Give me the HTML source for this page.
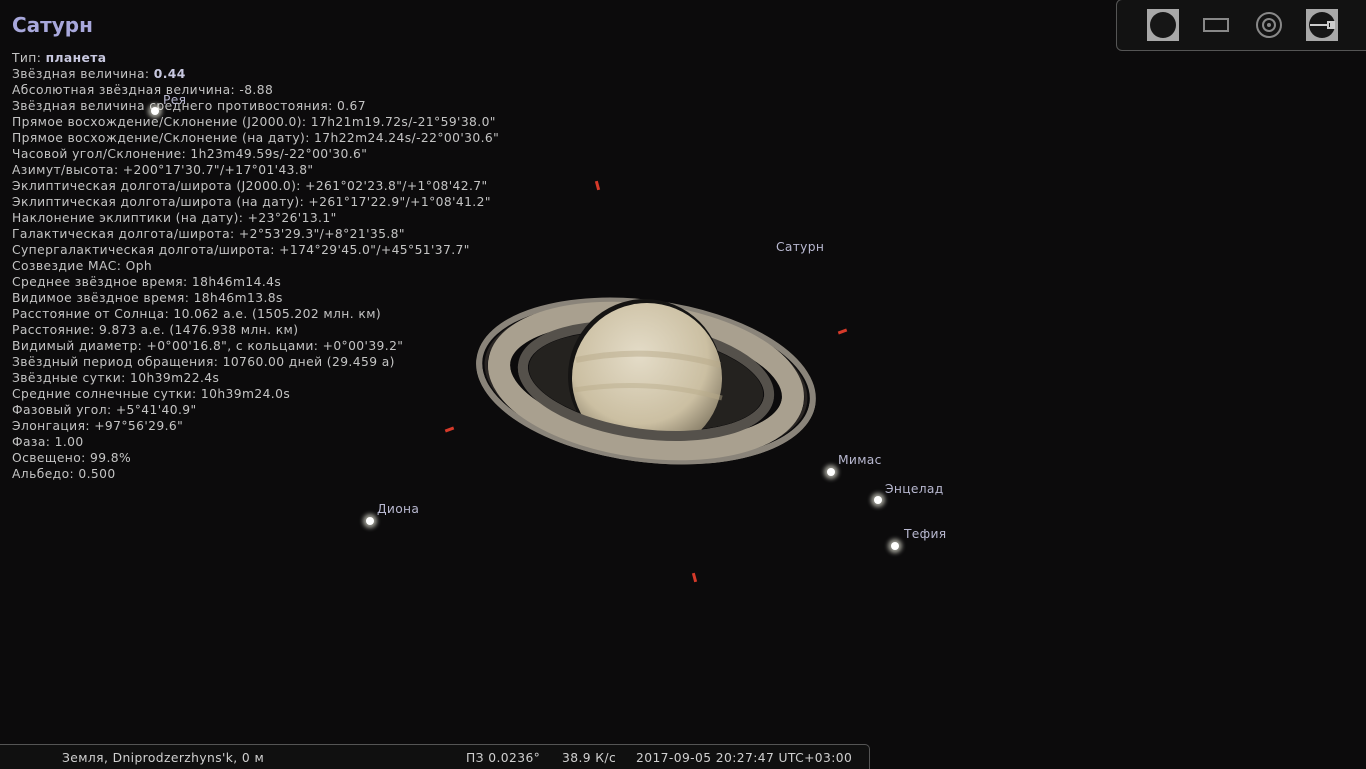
<!DOCTYPE html>
<html><head><meta charset="utf-8"><style>
html,body{margin:0;padding:0;width:1366px;height:768px;overflow:hidden;background:#0c0b0c;font-family:"DejaVu Sans","Liberation Sans",sans-serif;}
#info{position:absolute;left:12px;top:50px;font-size:12.3px;line-height:16px;color:#c4c4c4;white-space:pre;letter-spacing:0.4px;}
#info b{color:#c8c8e0;}
h1{position:absolute;left:12px;top:13px;margin:0;font-size:20px;color:#a8a8dc;font-weight:bold;}
.lbl{position:absolute;font-size:12.3px;color:#b8b8d0;white-space:pre;letter-spacing:0.3px;}
.star{position:absolute;width:8px;height:8px;border-radius:50%;background:#fff;box-shadow:0 0 4px 3px rgba(255,255,240,.6);}
.red{position:absolute;width:3px;height:9px;background:#d63a2a;}
#bar{position:absolute;left:0;top:744px;width:869px;height:24px;border:1px solid #555;border-left:none;border-bottom:none;border-top-right-radius:5px;background:#101010;color:#d0d0d0;font-size:12.3px;letter-spacing:0.4px;}
#tb{position:absolute;left:1116px;top:-1px;width:260px;height:50px;border:1px solid #555;border-radius:6px;background:#121212;}
</style></head><body>
<svg width="1366" height="768" style="position:absolute;left:0;top:0">
<defs>
<radialGradient id="pl" cx="45%" cy="35%" r="65%"><stop offset="0" stop-color="#e4dcc8"/><stop offset=".7" stop-color="#cbbfa2"/><stop offset="1" stop-color="#8a806a"/></radialGradient>
<clipPath id="front"><rect x="400" y="381" width="500" height="200" transform="rotate(7.6 646 381)"/></clipPath>
<g id="rings">
<ellipse cx="646" cy="381" rx="168" ry="78" fill="none" stroke="#8a847a" stroke-width="6"/>
<ellipse cx="646" cy="381" rx="161" ry="73" fill="none" stroke="#2a2624" stroke-width="3"/>
<ellipse cx="646" cy="381" rx="148" ry="66" fill="none" stroke="#a9a08f" stroke-width="22"/>
<ellipse cx="646" cy="381" rx="124" ry="53" fill="none" stroke="#55514b" stroke-width="10"/>
</g>
</defs>
<g transform="rotate(7.6 646 381)">
<use href="#rings"/>
<ellipse cx="646" cy="381" rx="118" ry="47" fill="#24221f"/>
</g>
<circle cx="645" cy="376" r="77" fill="#151413"/>
<circle cx="647" cy="378" r="75" fill="url(#pl)"/>
<path d="M576 360 Q648 345 720 365" stroke="#b8aa8a" stroke-width="6" fill="none" opacity=".5"/>
<path d="M574 390 Q648 378 722 398" stroke="#b8aa8a" stroke-width="5" fill="none" opacity=".45"/>
<g clip-path="url(#front)"><g transform="rotate(7.6 646 381)"><use href="#rings"/></g></g>
</svg>
<h1>Сатурн</h1>
<div id="info">Тип: <b>планета</b>
Звёздная величина: <b>0.44</b>
Абсолютная звёздная величина: -8.88
Звёздная величина среднего противостояния: 0.67
Прямое восхождение/Склонение (J2000.0): 17h21m19.72s/-21°59'38.0"
Прямое восхождение/Склонение (на дату): 17h22m24.24s/-22°00'30.6"
Часовой угол/Склонение: 1h23m49.59s/-22°00'30.6"
Азимут/высота: +200°17'30.7"/+17°01'43.8"
Эклиптическая долгота/широта (J2000.0): +261°02'23.8"/+1°08'42.7"
Эклиптическая долгота/широта (на дату): +261°17'22.9"/+1°08'41.2"
Наклонение эклиптики (на дату): +23°26'13.1"
Галактическая долгота/широта: +2°53'29.3"/+8°21'35.8"
Супергалактическая долгота/широта: +174°29'45.0"/+45°51'37.7"
Созвездие МАС: Oph
Среднее звёздное время: 18h46m14.4s
Видимое звёздное время: 18h46m13.8s
Расстояние от Солнца: 10.062 а.е. (1505.202 млн. км)
Расстояние: 9.873 а.е. (1476.938 млн. км)
Видимый диаметр: +0°00'16.8", с кольцами: +0°00'39.2"
Звёздный период обращения: 10760.00 дней (29.459 а)
Звёздные сутки: 10h39m22.4s
Средние солнечные сутки: 10h39m24.0s
Фазовый угол: +5°41'40.9"
Элонгация: +97°56'29.6"
Фаза: 1.00
Освещено: 99.8%
Альбедо: 0.500</div>
<div class="star" style="left:151px;top:107px"></div><div class="lbl" style="left:163px;top:93px">Рея</div>
<div class="lbl" style="left:776px;top:240px">Сатурн</div>
<div class="star" style="left:827px;top:468px"></div><div class="lbl" style="left:838px;top:453px">Мимас</div>
<div class="star" style="left:874px;top:496px"></div><div class="lbl" style="left:885px;top:482px">Энцелад</div>
<div class="star" style="left:891px;top:542px"></div><div class="lbl" style="left:904px;top:527px">Тефия</div>
<div class="star" style="left:366px;top:517px"></div><div class="lbl" style="left:377px;top:502px">Диона</div>
<div class="red" style="left:596px;top:181px;transform:rotate(-15deg)"></div>
<div class="red" style="left:841px;top:327px;transform:rotate(70deg)"></div>
<div class="red" style="left:448px;top:425px;transform:rotate(70deg)"></div>
<div class="red" style="left:693px;top:573px;transform:rotate(-15deg)"></div>
<div id="tb">
<svg width="260" height="50" style="position:absolute;left:0;top:0">
<rect x="30" y="9" width="32" height="32" fill="#a8a8a8"/><circle cx="46" cy="25" r="13" fill="#161616"/>
<rect x="87" y="19" width="24" height="12" fill="none" stroke="#888" stroke-width="2"/>
<circle cx="152" cy="25" r="12" fill="none" stroke="#888" stroke-width="2"/><circle cx="152" cy="25" r="6" fill="none" stroke="#888" stroke-width="2"/><circle cx="152" cy="25" r="2" fill="#888"/>
<rect x="189" y="9" width="32" height="32" fill="#a8a8a8"/><circle cx="205" cy="25" r="13" fill="#161616"/>
<path d="M193 25 H211 M211 22 h6 v2 h-3 v2 h3 v2 h-6z" stroke="#ccc" stroke-width="2" fill="none"/>
</svg></div>
<div id="bar">
<span style="position:absolute;left:62px;top:6px">Земля, Dniprodzerzhyns'k, 0 м</span>
<span style="position:absolute;left:466px;top:6px">ПЗ 0.0236°</span>
<span style="position:absolute;left:562px;top:6px">38.9 К/с</span>
<span style="position:absolute;left:636px;top:6px">2017-09-05 20:27:47 UTC+03:00</span>
</div>
</body></html>
